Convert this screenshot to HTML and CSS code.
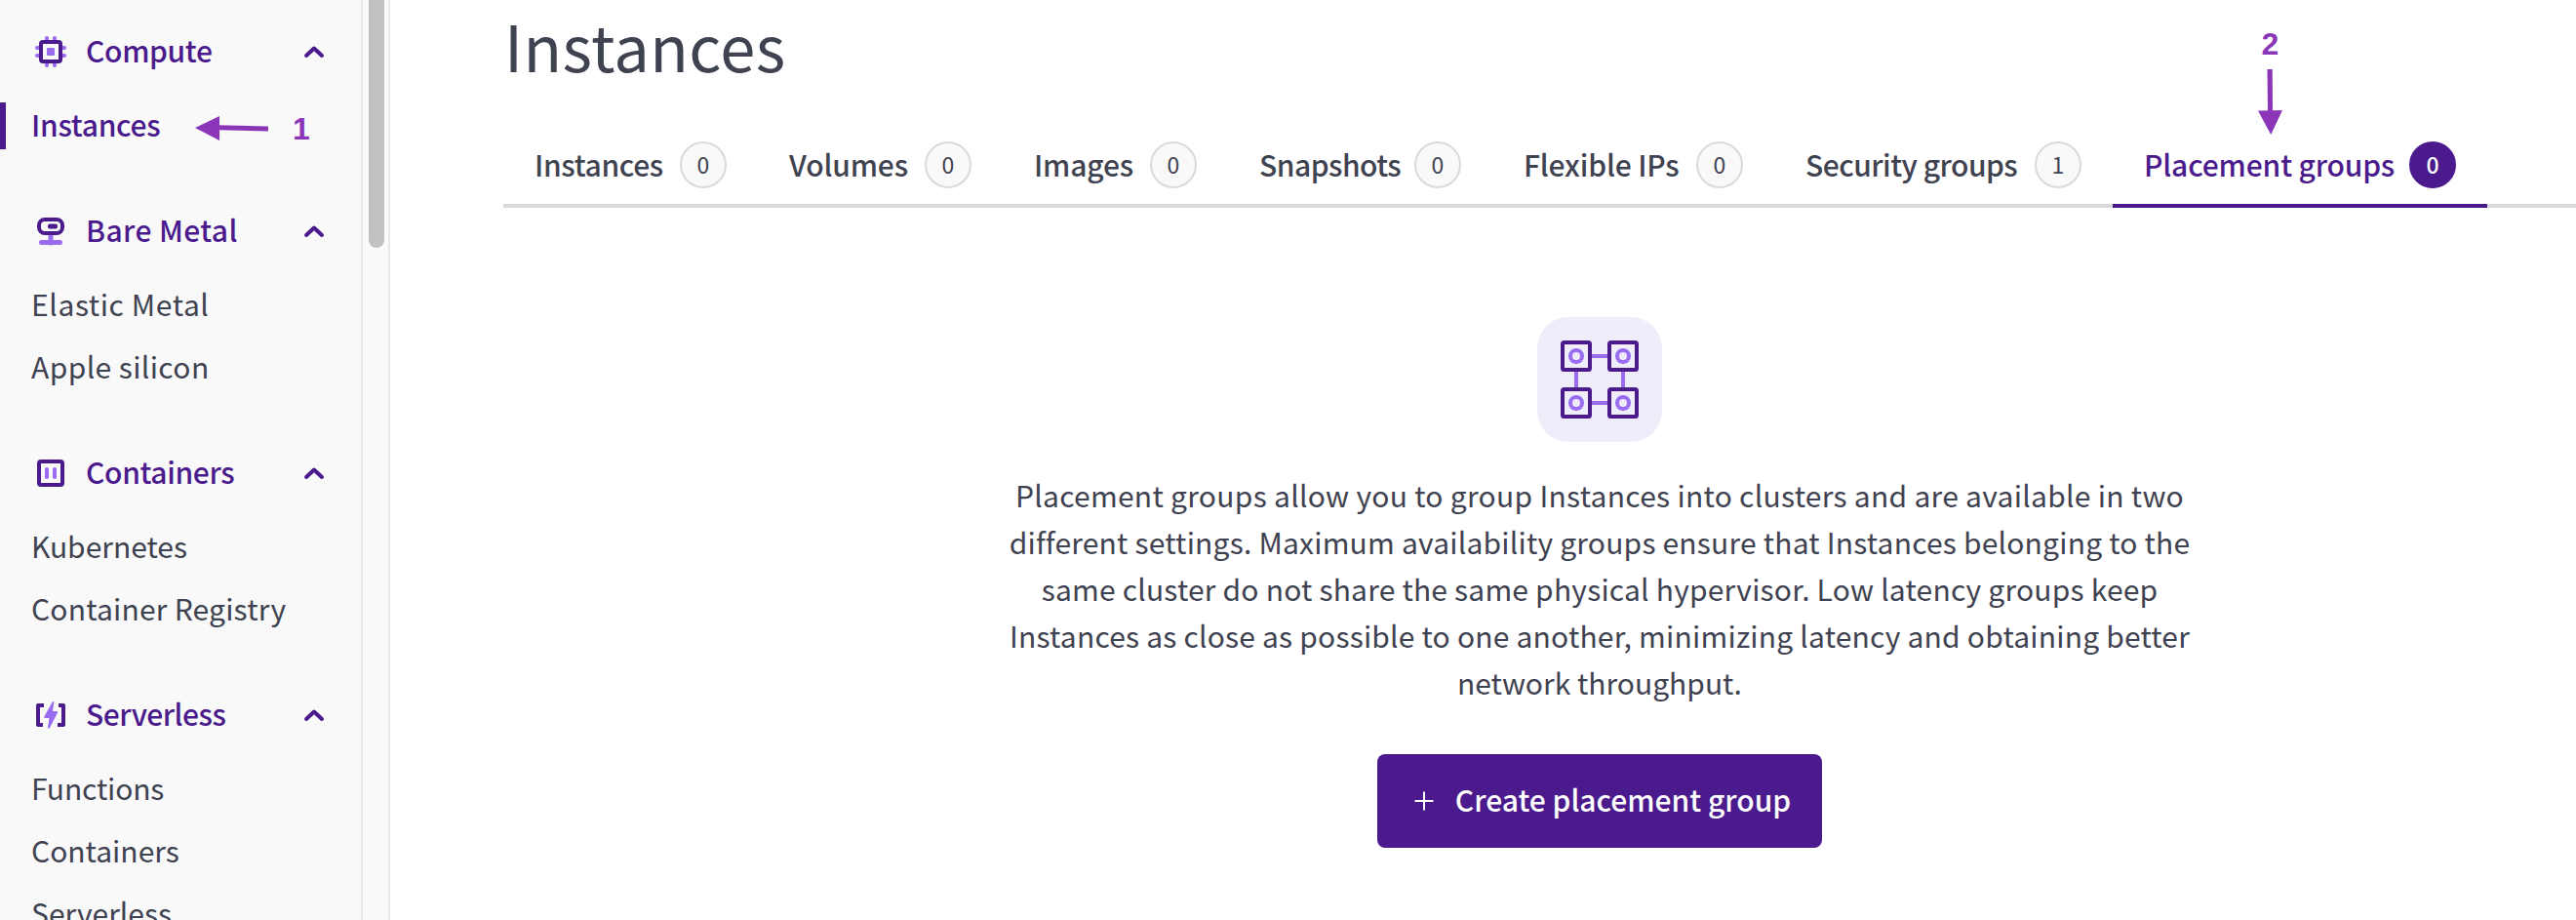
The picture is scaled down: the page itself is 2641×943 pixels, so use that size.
FILE: index.html
```html
<!DOCTYPE html>
<html lang="en">
<head>
<meta charset="utf-8">
<title>Instances</title>
<link rel="stylesheet" href="styles.css">
</head>
<body>
<div class="app">
  <nav class="sidebar">
    <section class="group">
      <div class="group-head">
        <svg class="group-icon" viewBox="0 0 40 40"><path class="light-stroke" d="M16 6v28M24 6v28M6 16h28M6 24h28" stroke-width="4" stroke-linecap="round"/><rect x="10" y="10" width="20" height="20" rx="2" fill="#f9f9fa" stroke="#4b1b8d" stroke-width="4"/><rect class="light-fill" x="16" y="16" width="8" height="8" rx="1"/></svg>
        <span class="group-title snug">Compute</span>
        <svg class="chevron" viewBox="0 0 24 16"><path d="M4 12l8-7.5 8 7.5"/></svg>
      </div>
      <a class="item current"><span>Instances</span></a>
    </section>
    <section class="group">
      <div class="group-head">
        <svg class="group-icon" viewBox="0 0 40 40"><path class="light-stroke" d="M20 24v8M10.500 31.500h19" stroke-width="5" stroke-linecap="round"/><rect x="8" y="8" width="24" height="14" rx="6" fill="#f9f9fa" stroke="#4b1b8d" stroke-width="4"/><rect x="17" y="12.500" width="10" height="5" rx="2" fill="#4b1b8d"/></svg>
        <span class="group-title loose">Bare Metal</span>
        <svg class="chevron" viewBox="0 0 24 16"><path d="M4 12l8-7.5 8 7.5"/></svg>
      </div>
      <a class="item"><span class="looser">Elastic Metal</span></a>
      <a class="item"><span class="loose">Apple silicon</span></a>
    </section>
    <section class="group">
      <div class="group-head">
        <svg class="group-icon" viewBox="0 0 40 40"><rect x="8" y="8" width="24" height="24" rx="2" fill="none" stroke="#4b1b8d" stroke-width="4"/><path class="light-stroke" d="M16 16v8M24 16v8" stroke-width="4" stroke-linecap="round"/></svg>
        <span class="group-title snug">Containers</span>
        <svg class="chevron" viewBox="0 0 24 16"><path d="M4 12l8-7.5 8 7.5"/></svg>
      </div>
      <a class="item"><span>Kubernetes</span></a>
      <a class="item"><span class="airy">Container Registry</span></a>
    </section>
    <section class="group">
      <div class="group-head">
        <svg class="group-icon" viewBox="0 0 40 40"><path d="M13 10H7v20h5M28 10h5v20h-6" fill="none" stroke="#4b1b8d" stroke-width="4" stroke-linejoin="round" stroke-linecap="butt"/><path class="light-fill" d="M22 6q1.500-.5 1.300 1L22 16h4.500q1 .3.500 1.500L19 33q-1.500 1.500-2 0L18.500 23H14q-1.200-.3-.7-1.500z"/></svg>
        <span class="group-title tight">Serverless</span>
        <svg class="chevron" viewBox="0 0 24 16"><path d="M4 12l8-7.5 8 7.5"/></svg>
      </div>
      <a class="item"><span class="slim">Functions</span></a>
      <a class="item"><span>Containers</span></a>
      <a class="item"><span>Serverless</span></a>
    </section>
  </nav>
  <div class="scrollbar"><div class="thumb"></div></div>
  <main class="main">
    <h1 class="title">Instances</h1>
    <div class="tabs">
      <a class="tab t-instances"><span class="label snug">Instances</span><span class="badge">0</span></a>
      <a class="tab t-volumes"><span class="label slim">Volumes</span><span class="badge">0</span></a>
      <a class="tab t-images"><span class="label slim">Images</span><span class="badge">0</span></a>
      <a class="tab t-snapshots"><span class="label tight">Snapshots</span><span class="badge">0</span></a>
      <a class="tab t-ips"><span class="label slim">Flexible IPs</span><span class="badge">0</span></a>
      <a class="tab t-security"><span class="label tight">Security groups</span><span class="badge">1</span></a>
      <a class="tab t-placement active"><span class="label slim">Placement groups</span><span class="badge">0</span></a>
    </div>
    <div class="empty">
      <div class="tile">
        <svg viewBox="0 0 80 80" width="80" height="80" fill="none" stroke-width="4"><g class="light-stroke"><path d="M32 16h16M32 64h16M16 32v16M64 32v16"/><circle cx="16" cy="16" r="6"/><circle cx="64" cy="16" r="6"/><circle cx="16" cy="64" r="6"/><circle cx="64" cy="64" r="6"/></g><g stroke="#4b1b8d"><rect x="2" y="2" width="28" height="28" rx="1.500"/><rect x="50" y="2" width="28" height="28" rx="1.500"/><rect x="2" y="50" width="28" height="28" rx="1.500"/><rect x="50" y="50" width="28" height="28" rx="1.500"/></g></svg>
      </div>
      <p class="copy"><span class="first">Placement groups allow you to group Instances into clusters and are available in two</span><br>different settings. Maximum availability groups ensure that Instances belonging to the<br>same cluster do not share the same physical hypervisor. Low latency groups keep<br>Instances as close as possible to one another, minimizing latency and obtaining better<br><span class="last">network throughput.</span></p>
      <button class="create"><svg viewBox="0 0 20 20" width="20" height="20"><path d="M10 .5v19M.5 10h19" stroke="#fff" stroke-width="2"/></svg><span>Create placement group</span></button>
    </div>
  </main>
</div>
<div class="note note-one"><svg width="76" height="26" viewBox="0 0 76 26"><path d="M0 12L25 0v25z"/><path d="M24 9.200l51 1.300v5l-51-1.300z"/></svg><b>1</b></div>
<div class="note note-two"><b>2</b><svg width="26" height="67" viewBox="0 0 26 67"><path d="M9.500 0h5.200l.3 43h-5z"/><path d="M0 42.500L25 42 13.200 67z"/></svg></div>
</body>
</html>
```
FILE: styles.css
```css
* { box-sizing: border-box; }
body {
  margin: 0;
  background: #fff;
  color: #3f4250;
  font-family: "Noto Sans CJK SC", "Noto Sans", sans-serif;
  font-size: 30px;
  overflow: hidden;
}
.app { display: flex; height: 943px; overflow: hidden; }
.light-stroke { stroke: #9a6cf0; }
.light-fill { fill: #9a6cf0; }

/* Tracking steps */
.tight { letter-spacing: -0.5px; }
.snug { letter-spacing: -0.35px; }
.slim { letter-spacing: -0.15px; }
.airy { letter-spacing: 0.2px; }
.loose { letter-spacing: 0.4px; }
.looser { letter-spacing: 0.6px; }

.sidebar {
  width: 372px;
  flex: none;
  height: 943px;
  overflow: hidden;
  padding-top: 21px;
  background: #f9f9fa;
  border-right: 2px solid #e9e9eb;
}
.group { margin-bottom: 44px; }
.group-head {
  display: flex;
  align-items: center;
  height: 64px;
  margin-bottom: 12px;
  padding: 0 36px 0 32px;
  color: #4b1b8d;
  font-weight: 500;
}
.group-icon { width: 40px; height: 40px; flex: none; }
.group-title { flex: 1; padding: 0 0 5px 16px; white-space: nowrap; }
.chevron { width: 24px; height: 16px; }
.chevron path { fill: none; stroke: #4b1b8d; stroke-width: 4; stroke-linecap: round; stroke-linejoin: round; }
.item {
  display: flex;
  align-items: center;
  height: 64px;
  padding-left: 32px;
  white-space: nowrap;
}
.item span { padding-bottom: 4px; }
.current { color: #4b1b8d; font-weight: 500; letter-spacing: -0.3px; }
.current::before {
  content: "";
  width: 6px;
  height: 48px;
  margin: 0 26px 0 -32px;
  background: #4b1b8d;
}

.scrollbar {
  width: 28px;
  flex: none;
  padding-left: 6px;
  background: #fafafa;
  border-right: 2px solid #e8e8e8;
}
.thumb { width: 16px; height: 254px; border-radius: 0 0 8px 8px; background: #c1c1c1; }

.main { flex: 1; min-width: 0; padding-left: 116px; }
.title {
  height: 129px;
  margin: 0;
  padding-left: 1px;
  font-size: 65px;
  font-weight: 400;
  letter-spacing: 0.4px;
  line-height: 92px;
}
.tabs { display: flex; height: 84px; border-bottom: 4px solid #d9dadd; }
.tab {
  display: flex;
  flex: none;
  align-items: center;
  justify-content: space-between;
  height: 84px;
  padding: 4px 32px 4px;
  border-bottom: 4px solid transparent;
  font-weight: 500;
  white-space: nowrap;
}
.label { padding-bottom: 3px; }
.t-instances { width: 261px; }
.t-volumes { width: 251px; }
.t-images { width: 231px; }
.t-snapshots { width: 271px; }
.t-ips { width: 289px; }
.t-security { width: 347px; }
.t-placement { width: 384px; }
.badge {
  display: flex;
  align-items: center;
  justify-content: center;
  width: 48px;
  height: 48px;
  padding-bottom: 2px;
  border: 2px solid #d9dadd;
  border-radius: 50%;
  background: #f9f9fa;
  font-size: 23px;
  font-weight: 400;
}
.active { color: #4b1b8d; border-bottom-color: #4b1b8d; }
.active .badge { color: #fff; background: #4b1b8d; border-color: #4b1b8d; font-weight: 500; }

.empty { display: flex; flex-direction: column; align-items: center; width: 2248px; padding-top: 112px; }
.tile {
  display: flex;
  align-items: center;
  justify-content: center;
  width: 128px;
  height: 128px;
  border-radius: 32px;
  background: #f0edfb;
}
.copy { margin: 30px 0 50px; line-height: 48px; letter-spacing: 0.2px; text-align: center; white-space: nowrap; }
.first { letter-spacing: 0.28px; }
.last { letter-spacing: 0; }
.create {
  display: flex;
  align-items: center;
  justify-content: center;
  gap: 22px;
  width: 456px;
  height: 96px;
  padding: 0 0 0 6px;
  border: 0;
  border-radius: 8px;
  background: #4b1b8d;
  color: #fff;
  font: 500 30px "Noto Sans CJK SC", sans-serif;
  white-space: nowrap;
}
.create span { padding-bottom: 4px; }

/* Step annotations laid over the page */
.note { position: absolute; display: flex; align-items: center; color: #8b36b8; font: 32px "Liberation Sans", Arial, sans-serif; }
.note svg { fill: #8b36b8; }
.note-one { left: 200px; top: 113px; gap: 24px; }
.note-one b { padding-top: 1px; }
.note-two { left: 2315px; top: 27px; flex-direction: column; gap: 7px; }
.note-two b { margin-right: 1px; }
```
